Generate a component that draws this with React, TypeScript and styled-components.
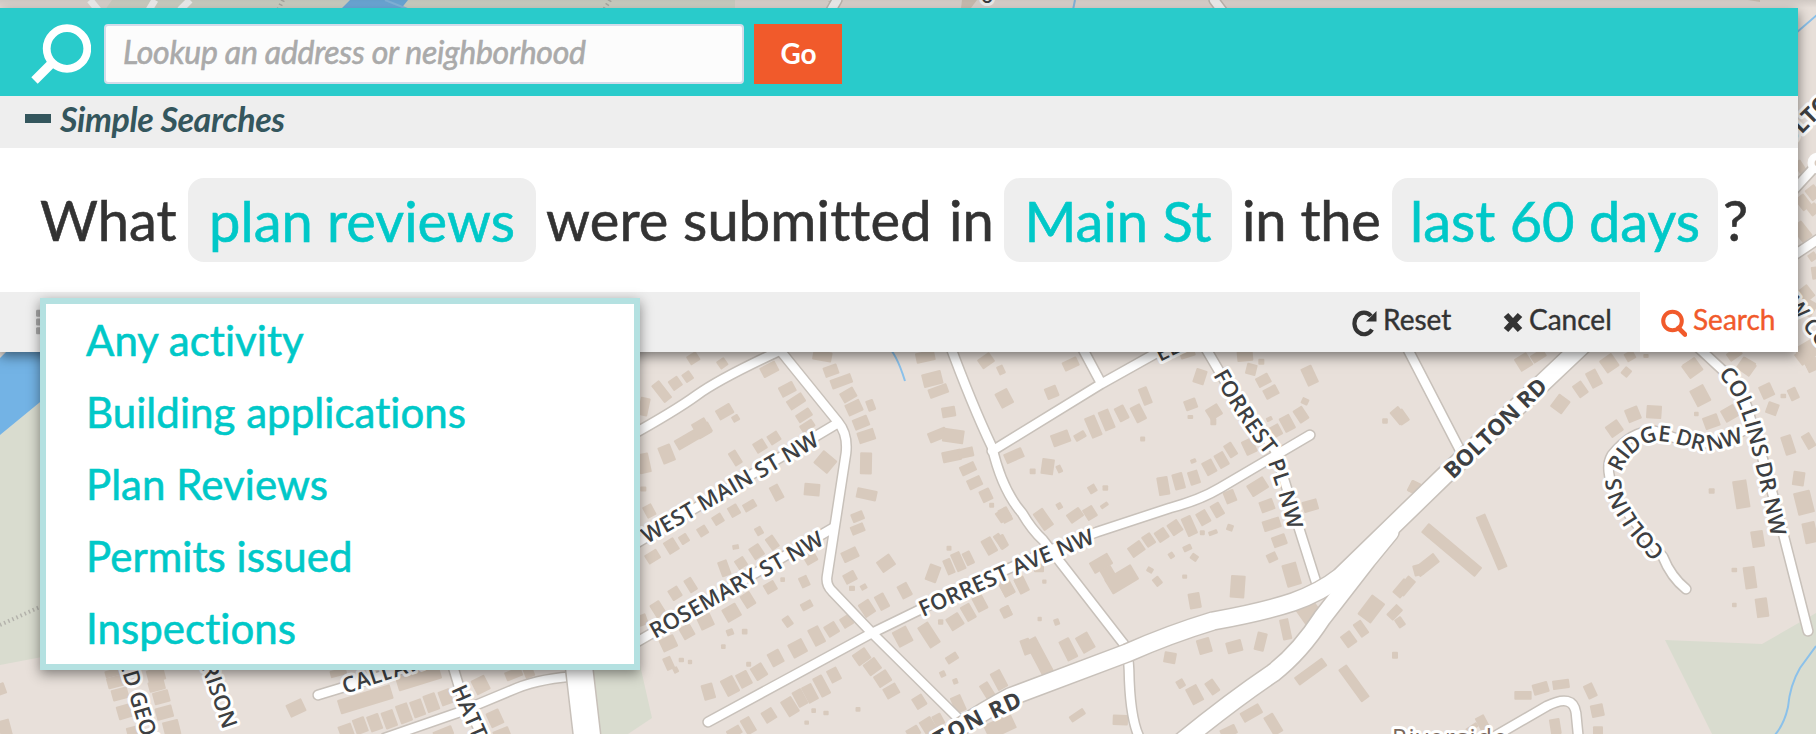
import React from 'react';
import styled, { createGlobalStyle } from 'styled-components';
import { FaTh } from 'react-icons/fa';

const GlobalStyle = createGlobalStyle`
  * { box-sizing: border-box; }
  body {
    margin: 0;
    background: #e8e0da;
    font-family: Lato, sans-serif;
    font-variant-ligatures: none;
    color: #333;
    overflow: hidden;
  }
  button, input { font-variant-ligatures: none; }
`;

const Page = styled.main`
  position: relative;
  width: 1816px;
  height: 734px;
  padding-top: 8px;
  overflow: hidden;
`;

const MapCanvas = styled.svg`
  position: absolute;
  inset: 0;
  display: block;
`;

const TopShade = styled.div`
  position: absolute;
  inset: 0 0 auto 0;
  height: 8px;
  background: linear-gradient(rgba(0, 0, 0, 0.1), rgba(0, 0, 0, 0));
`;

const Panel = styled.section`
  position: relative;
  width: 1798px;
  background: #fff;
  box-shadow: 0 4px 12px rgba(0, 0, 0, 0.5);
`;

const LookupBar = styled.form`
  display: flex;
  align-items: center;
  height: 88px;
  padding: 4px 0 0 30px;
  background: #29cbcb;
`;

const LookupIcon = styled.svg`
  display: block;
  flex: none;
  width: 61px;
  height: 62px;
  margin-right: 13px;
`;

const LookupInput = styled.input`
  width: 640px;
  height: 60px;
  margin: 0;
  padding: 0 17px 5px;
  border: 2px solid #d3dcea;
  border-radius: 4px;
  background: #fcfcfc;
  font: italic 400 32px Lato, sans-serif;
  letter-spacing: -0.27px;
  color: #333;
  -webkit-text-stroke: 0.6px currentColor;
  &::placeholder { color: #aaa; opacity: 1; }
`;

const GoButton = styled.button`
  width: 88px;
  height: 60px;
  margin-left: 10px;
  padding: 0 0 2px 1px;
  border: 0;
  background: #f15a2b;
  color: #fff;
  font: 700 28px Lato, sans-serif;
`;

const SectionBar = styled.header`
  display: flex;
  align-items: center;
  height: 52px;
  padding: 0 0 6px 25px;
  background: #eee;
  color: #34565d;
`;

const CollapseMark = styled.span`
  width: 26px;
  height: 9px;
  margin: 0 9px 1px 0;
  background: currentColor;
`;

const SectionTitle = styled.h2`
  margin: 0;
  font: italic 700 34px/48px Lato, sans-serif;
  letter-spacing: -0.4px;
`;

const Sentence = styled.div`
  display: flex;
  align-items: center;
  height: 144px;
  padding-left: 40px;
  font-size: 56px;
  line-height: 86px;
  white-space: pre;
  -webkit-text-stroke: 0.6px currentColor;
`;

const Words = styled.span<{ $width: number; $indent?: number; $tracking?: number }>`
  width: ${p => p.$width}px;
  padding-left: ${p => p.$indent ?? 0}px;
  letter-spacing: ${p => p.$tracking ?? 0}px;
`;

const Choice = styled.button<{ $width: number }>`
  width: ${p => p.$width}px;
  height: 84px;
  padding: 0;
  border: 0;
  border-radius: 16px;
  background: #eee;
  color: #00c8c8;
  font: 400 56px/86px Lato, sans-serif;
  letter-spacing: 0;
  white-space: nowrap;
`;

const ActionBar = styled.footer`
  display: flex;
  align-items: stretch;
  justify-content: flex-end;
  height: 60px;
  background: #eee;
`;

const GridToggle = styled.span`
  display: flex;
  align-items: center;
  margin-right: auto;
  padding-left: 36px;
  color: #aaa;
  font-size: 28px;
`;

const Action = styled.button<{ $width: number; $primary?: boolean }>`
  display: flex;
  align-items: center;
  gap: 6px;
  width: ${p => p.$width}px;
  padding: 0 0 6px ${p => (p.$primary ? 21 : 0)}px;
  border: 0;
  background: ${p => (p.$primary ? '#fff' : 'transparent')};
  color: ${p => (p.$primary ? '#f15a2b' : '#333')};
  font: 400 28px Lato, sans-serif;
  -webkit-text-stroke: 0.4px currentColor;
  & svg { flex: none; margin-top: 7px; }
`;

const Menu = styled.ul`
  position: absolute;
  left: 40px;
  top: 290px;
  width: 600px;
  height: 372px;
  margin: 0;
  padding: 0;
  border: 6px solid #b4e1e1;
  background: #fff;
  box-shadow: 0 4px 12px rgba(0, 0, 0, 0.45);
  list-style: none;
`;

const MenuItem = styled.li`
  height: 72px;
  padding-left: 40px;
  color: #00c8c8;
  font-size: 42px;
  line-height: 73px;
  letter-spacing: 0.05px;
  -webkit-text-stroke: 0.6px currentColor;
`;

type Footprint = [cx: number, cy: number, w: number, h: number, angle: number];
type District = { x: number; y: number; lots: Footprint[] };

const districts: District[] = [
  { x: 630, y: 340, lots: [
    [190,55,34,30,-32],[277,70,28,28,-35],[95,155,30,66,-38],[136,130,34,34,-35],[173,110,28,30,-35],[42,200,30,55,12],[110,342,40,54,-22],[190,288,118,34,-30],[215,265,46,52,-30],[284,215,50,34,-30],[317,235,22,20,-30],[316,354,26,46,-32],[390,318,36,34,-32],[432,294,36,32,-32],[418,88,52,34,-28],[472,148,48,34,-28],[498,184,54,32,-33],[522,226,48,28,-33],[532,258,44,26,-33],[577,48,58,30,10],[603,92,44,32,-20],[634,124,66,30,-20],[655,165,46,34,-30],[672,203,48,38,-25],[722,196,24,34,-20],[693,248,48,34,-22],[709,288,52,36,-18],[586,366,50,54,-50],[708,370,36,66,1],[710,463,62,32,12],[683,530,38,28,-22],[683,567,42,28,-22],[546,449,48,38,5],[440,458,30,48,-28],[42,370,36,60,-12],[40,447,18,15,0],[58,513,30,38,-28],[359,497,40,26,-30],[312,512,32,34,-30],[264,538,32,30,-32],[218,573,30,30,-32],[162,597,28,28,-32],[124,618,36,42,-32],[68,650,42,32,-32],[387,573,22,26,-30],[317,621,20,15,-10],[427,608,28,42,-35],[380,635,36,40,-33],[333,669,32,32,-33],[283,685,30,48,-20],[182,735,26,44,-32],[135,760,34,36,-32],[84,808,34,46,-32],[38,840,28,34,-20],[660,644,50,34,-25],[660,712,38,32,-28],[701,741,20,17,-30],[666,745,18,16,0],[540,652,38,38,-30],[523,725,28,34,-25],[458,719,14,14,0],[421,742,36,32,-30],[354,780,34,44,-32],[305,818,48,44,-30],[227,845,44,40,-25],[171,875,38,40,-30],[115,910,48,40,-25],[116,970,26,40,-24],[154,960,16,13,0],[137,990,16,19,-28],[180,966,13,13,0],[280,920,14,14,0],[300,877,22,20,-20],[344,875,17,17,0],[530,796,36,24,-28],[473,845,25,32,-35],[650,844,34,34,-32],[605,868,38,38,-32],[560,888,36,56,-28],[503,925,48,46,-28],[437,954,40,44,-28],[387,995,40,44,-32],[342,1018,38,46,-28],[300,1038,42,54,-28],[235,1055,36,48,-16],[356,973,15,15,0],[612,1005,34,42,-28],[575,1038,32,64,-28],[540,1060,34,54,-28],[510,1074,32,52,-28],[480,1100,38,54,-32],[417,1126,38,38,-32],[355,1157,32,50,-30],[313,1176,44,28,-30],[551,1112,14,14,0],[588,1119,16,14,0],[530,1148,14,13,0],[684,1108,15,14,0],[695,950,46,40,-35],[727,980,44,42,-36],[758,1016,45,40,-33],[784,1053,44,36,-30],[868,1085,36,38,-32],[985,1092,34,52,-24],[1072,1052,30,50,-32],[1107,1020,34,58,-28],[966,954,38,24,-32],[938,1002,18,19,-25],[976,1024,16,17,-20],[768,670,48,40,-35],[711,805,38,46,-33],[756,785,32,48,-28],[824,752,34,44,-28],[818,890,48,52,-28],[897,885,38,74,-33],[975,845,44,42,-32],[1015,817,32,50,-30],[1050,790,34,48,-28],[932,846,16,16,0],[1130,815,27,34,-25],[1130,742,36,52,-28],[1174,735,28,48,-28],[957,625,15,15,0],[909,700,36,52,20],[957,680,25,48,-23],[985,665,30,58,-24],[1015,655,26,42,-26],[1078,618,34,50,-30],[1111,604,22,50,-35],[886,50,58,32,-12],[907,117,60,42,-14],[925,153,60,30,-20],[956,216,42,32,-10],[923,285,58,32,-22],[970,288,64,42,8],[965,348,58,34,-12],[1008,338,46,30,-12],[1014,386,48,30,-25],[1034,428,44,32,-25],[1068,466,34,38,-25],[1085,496,15,15,0],[1120,525,40,36,-34],[1068,62,44,34,-35],[1113,90,21,28,-25],[1123,175,42,50,-28],[1152,347,58,32,-24],[1190,920,30,48,-20],[850,1176,40,30,-30],[895,1158,40,48,-32],[925,1140,30,36,-28],[1110,1160,90,48,-25]
  ] },
  { x: 1000, y: 340, lots: [
    [212,72,48,30,-25],[155,157,38,36,-22],[436,168,28,54,-22],[415,220,34,52,-27],[365,220,32,46,-27],[320,240,34,62,-23],[280,260,34,66,-23],[182,295,56,38,-20],[240,288,36,22,-30],[428,297,15,15,0],[562,40,46,26,-18],[600,110,35,45,18],[572,193,38,32,-20],[642,216,42,38,-32],[571,231,17,12,0],[640,245,18,22,0],[735,48,48,32,-5],[754,88,32,34,14],[784,65,18,18,0],[790,121,42,32,-28],[813,156,44,32,-28],[929,107,36,58,-25],[903,224,33,45,-33],[915,184,22,20,25],[862,250,35,48,-28],[825,274,38,36,-28],[808,237,19,13,-25],[748,320,36,46,-25],[692,330,28,44,-32],[665,360,32,46,-30],[628,382,34,44,-28],[582,413,32,42,-18],[536,424,33,50,-15],[490,438,34,56,-10],[580,363,18,13,-22],[143,380,38,48,8],[98,394,18,17,0],[178,387,16,24,-25],[277,447,25,25,-30],[316,444,17,17,0],[178,498,17,20,-30],[225,526,46,32,-35],[270,519,34,38,-32],[313,496,26,13,-35],[130,538,36,62,-35],[773,440,58,40,-32],[801,497,43,35,-20],[690,470,34,38,-22],[652,510,31,42,-30],[610,533,34,42,-30],[568,558,32,60,-24],[525,563,37,40,-34],[485,585,36,36,-34],[446,600,31,38,-34],[409,627,46,36,-35],[639,578,28,14,-20],[607,578,15,15,0],[690,563,20,20,20],[562,624,27,18,-25],[583,652,23,20,35],[514,646,17,19,-34],[303,670,64,38,-30],[325,702,38,42,-30],[365,718,92,52,-31],[450,690,20,16,30],[472,724,23,28,-38],[554,710,15,13,0],[713,740,44,68,4],[584,782,36,48,-10],[875,704,45,70,-16],[816,652,31,27,-25],[838,602,43,34,-20],[815,553,54,33,-18],[931,497,46,34,-16],[1197,227,34,50,-40],[1155,243,17,16,0],[1243,443,34,36,27],[16,525,31,45,-28],[6,605,28,40,-28],[65,735,32,50,-26],[19,745,32,48,-28],[18,816,30,32,-27],[119,837,13,13,0],[170,846,17,20,-20],[133,725,13,13,0],[117,684,30,26,0],[256,908,42,55,-30],[205,928,35,66,-27],[118,950,38,120,-28],[232,1126,50,21,-34],[361,1140,46,32,2],[613,918,41,46,-16],[703,920,48,36,-15],[782,905,31,56,14],[857,868,28,64,-12],[510,953,37,34,10],[542,1031,24,26,-30],[584,1064,38,54,-28],[637,1041,30,44,-35],[930,820,62,76,-35],[1114,807,50,74,37],[1083,866,29,48,-35],[1046,898,36,43,-36],[1206,745,32,55,40],[1184,817,28,45,44],[1200,847,24,31,-34],[1185,946,18,21,0],[932,995,104,30,-36],[1062,1030,31,120,-36],[754,1119,64,33,-30],[820,1153,33,64,-31],[686,1175,49,30,-25],[1255,690,30,34,-15]
  ] },
  { x: 1400, y: 340, lots: [
    [371,66,43,44,-32],[415,48,45,27,-32],[481,192,43,48,37],[541,148,33,44,-35],[582,116,35,52,-28],[628,70,45,46,-35],[679,96,25,27,40],[690,48,30,28,-30],[738,48,16,12,0],[875,82,42,43,-30],[901,167,47,56,-28],[934,245,47,39,-20],[989,220,45,41,-30],[889,222,14,14,0],[1042,76,42,37,30],[1100,153,39,42,-25],[1117,206,35,37,20],[1180,162,28,37,-25],[1150,168,17,14,0],[643,266,44,40,-35],[699,223,42,42,-22],[762,216,46,40,4],[5,231,32,43,-35],[43,442,30,37,25],[155,630,37,210,-50],[275,606,31,174,-23],[80,675,76,34,-38],[18,738,31,59,40],[1024,463,43,85,-9],[935,453,18,17,0],[1165,315,33,59,-18],[1226,303,29,47,-30],[1196,416,36,43,8],[1212,488,51,69,-14],[1073,597,38,50,-9],[1230,578,40,64,-12],[1050,713,36,67,-8],[1086,803,37,59,-8],[1003,690,17,14,0],[1003,795,14,14,0],[369,1066,52,26,0],[422,1045,48,34,-16],[483,1033,51,28,-8],[571,1053,30,45,-25],[592,1112,39,38,-12],[466,1160,32,48,-9],[247,1148,30,43,-28],[594,1173,30,28,0],[216,1163,39,15,-33],[1235,70,40,30,-30],[1220,28,65,42,-30]
  ] },
  { x: 0, y: 660, lots: [
    [0,88,34,35,-20],[15,205,36,52,-15],[342,38,55,22,-15],[345,66,48,34,-15],[360,102,50,35,-15],[374,155,45,42,-16],[468,45,54,40,-15],[470,77,50,32,-15],[484,112,49,38,-15],[493,158,52,38,-15],[515,205,49,47,-14],[398,216,35,32,-15],[888,144,52,42,-25]
  ] },
  { x: 330, y: 660, lots: [
    [106,118,165,45,-17],[266,54,135,43,-17],[25,38,50,22,-15],[452,75,45,48,-27],[551,42,52,28,-22],[597,38,30,30,-22],[48,212,42,38,-20],[91,197,38,48,-20],[134,188,38,50,-20],[178,178,38,53,-20],[222,160,38,58,-20],[263,145,37,52,-20],[304,128,39,54,-20],[347,112,37,46,-20],[495,175,42,48,-25],[515,220,50,28,-22],[340,219,60,28,-22]
  ] },
  { x: 1656, y: 0, lots: [
    [432,500,24,38,-33],[442,607,33,44,-38],[471,578,35,40,-38],[472,628,32,32,-38],[438,695,38,58,-38],[470,770,25,24,-35],[445,885,52,44,-38],[460,925,35,48,30],[478,819,23,38,-8],[109,1104,50,48,-36],[271,1100,49,42,35],[235,1062,44,28,-35],[455,1060,72,42,-37],[475,1095,50,33,-24]
  ] },
];

const minorRoads = [
  'M628 437Q675 411 697 395T777 352L800 338',
  'M770 338L838 422Q848 434 846 453L827 577Q826 585 832 591L872 633L962 722',
  'M630 547L838 423',
  'M630 646L833 528',
  'M708 722L872 633L950 595L1050 550L1097 532L1170 508Q1200 500 1220 488L1310 435',
  'M948 340Q972 405 992 447Q1002 490 1022 513Q1032 530 1043 540L1123 643Q1128 649 1129 670Q1130 728 1144 745',
  'M992 451L1101 384L1185 337',
  'M1078 340L1101 383',
  'M1202 342L1229 388L1275 450L1298 525L1317 585',
  'M1403 340L1461 452',
  'M1690 340L1730 377Q1745 395 1750 417L1767 473L1783 533L1808 631',
  'M1686 589Q1671 577 1663 557L1630 516Q1600 475 1612 455Q1632 430 1655 431Q1690 445 1714 443L1750 428',
  'M1490 739L1547 706Q1573 693 1576 713L1579 744',
  'M318 695L420 664',
  'M451 660L463 700L485 740',
  'M385 738L457 713L517 688Q542 678 580 676',
  'M1790 194L1812 170',
  'M1790 258L1820 238',
  'M837 0L829 14',
  'M1214 0L1226 16',
];

const majorRoads = [
  'M925 750L960 727Q985 710 1010 697L1127 653Q1170 634 1213 621Q1263 612 1293 602Q1321 592 1340 577L1443 477L1590 338',
  'M1180 743Q1230 702 1273 673Q1300 652 1322 618L1367 560L1390 532',
];

const Roads = ({ lines, width }: { lines: string[]; width: number }) => (
  <g fill="none" strokeLinecap="round" strokeLinejoin="round">
    {lines.map(d => <path key={d} d={d} stroke="#c8c1ba" strokeWidth={width + 3} />)}
    {lines.map(d => <path key={d} d={d} stroke="#fff" strokeWidth={width} />)}
  </g>
);

type StreetLabel = { id: string; name: string; path: string; length?: number; bold?: boolean };
const streets: StreetLabel[] = [
  { id: 'west-main', name: 'WEST MAIN ST NW', path: 'M647 544L840 433', length: 200 },
  { id: 'rosemary', name: 'ROSEMARY ST NW', path: 'M655 639L845 533', length: 195 },
  { id: 'forrest-ave', name: 'FORREST AVE NW', path: 'M923 617L1040 565L1120 533', length: 188 },
  { id: 'forrest-pl', name: 'FORREST PL NW', path: 'M1213 375Q1235 415 1264 453Q1278 485 1293 550', length: 174 },
  { id: 'bolton', name: 'BOLTON RD', path: 'M1453 480L1560 377', length: 133, bold: true },
  { id: 'bolton-west', name: 'BOLTON RD', path: 'M897 774Q960 732 1040 698', length: 144, bold: true },
  { id: 'collins-ridge', name: 'COLLINS RIDGE DR NW', path: 'M1665 552L1639 521L1627 502Q1620 488 1621 473C1627 455 1642 443 1657 441C1672 441 1688 448 1703 451Q1722 451 1770 432', length: 233 },
  { id: 'collins', name: 'COLLINS DR NW', path: 'M1718 374Q1738 397 1746 428Q1758 470 1775 555', length: 173 },
  { id: 'ella', name: 'ELLA ST', path: 'M1160 362L1240 322' },
  { id: 'old-george', name: 'OLD GEORGE', path: 'M114 645L157 787' },
  { id: 'garrison', name: 'GARRISON', path: 'M187 624L240 780' },
  { id: 'callaway', name: 'CALLAWAY', path: 'M345 694L460 656' },
  { id: 'hatt', name: 'HATTON', path: 'M451 689L500 800' },
  { id: 'bolton-east', name: 'BOLTON', path: 'M1778 158L1870 67', bold: true },
  { id: 'collins-north', name: 'NW COLLINS', path: 'M1775 291L1860 400' },
];

const StreetMap = () => (
  <MapCanvas width="1816" height="734" viewBox="0 0 1816 734">
    <rect width="1816" height="734" fill="#e8e0da" />
    <path d="M0 435L42 400V657L0 665ZM112 0H735V10H105ZM592 665H640L652 718L628 734H600ZM1665 640L1762 644L1816 613V734H1712Z" fill="#d9dccf" />
    <path d="M0 358L10 348H45V398L0 435ZM350 0H408L400 10H340Z" fill="#73b3e5" />
    <g fill="none" stroke="#8bc1ea" strokeWidth="2">
      <path d="M886 345Q896 352 905 381M1816 646L1800 668Q1790 685 1788 707Q1784 725 1774 736M1796 33L1818 14M1075 0L1073 10M385 0L410 10" />
    </g>
    <path d="M0 625L42 606M283 0L278 10M610 0L604 10" fill="none" stroke="#b4b3ac" strokeWidth="4" strokeDasharray="1.5 3" />
    {districts.map(district => (
      <g key={`${district.x}-${district.y}`} fill="#d8cabd" transform={`translate(${district.x} ${district.y}) scale(.33333)`}>
        {district.lots.map(([cx, cy, w, h, angle], i) => (
          <rect key={i} x={cx - w / 2} y={cy - h / 2} width={w} height={h} rx="3" transform={`rotate(${angle} ${cx} ${cy})`} />
        ))}
      </g>
    ))}
    <path d="M962 0h15l-6 8h-10zM1748 0h12v2zM828 1h10l2 5h-8z" fill="#d8cabd" />
    <Roads lines={minorRoads} width={8.5} />
    <circle cx="1818" cy="163" r="7" fill="#d8cabd" stroke="#fff" strokeWidth="7" />
    <Roads lines={['M578 658L588 744']} width={26} />
    <Roads lines={majorRoads} width={17} />
    <path d="M1328 588L1390 532L1367 562L1340 590Z" fill="#fff" />
    <path d="M90 0L98 10M155 0L149 10M190 0L180 10" stroke="#fff" strokeWidth="7" />
    <g fontFamily="'Open Sans', 'Noto Sans', sans-serif" fill="#3d3f42" stroke="#fff" strokeWidth="6" strokeLinejoin="round" paintOrder="stroke">
      {streets.map(street => (
        <g key={street.id}>
          <path id={street.id} d={street.path} fill="none" stroke="none" />
          <text fontSize={street.bold ? 22.5 : 22} fontWeight={street.bold ? 700 : 600} textLength={street.length}>
            <textPath href={`#${street.id}`}>{street.name}</textPath>
          </text>
        </g>
      ))}
      <text x="981" y="3" fontSize="20" fontWeight="600">o</text>
      <text x="1392" y="746" fontSize="24" fontWeight="400" fill="#79675b" textLength="115">Riverside</text>
    </g>
  </MapCanvas>
);

const ResetIcon = () => (
  <svg width="25" height="28" viewBox="0 0 25 28">
    <path d="M20 20.5A9.6 10.8 0 1 1 19 7" fill="none" stroke="currentColor" strokeWidth="4.2" />
    <path d="M24.5 2V12.5H14Z" fill="currentColor" />
  </svg>
);

const CancelIcon = () => (
  <svg width="20" height="23" viewBox="0 0 20 23">
    <path d="M3 4L17 19M17 4L3 19" stroke="currentColor" strokeWidth="6.2" />
  </svg>
);

const SearchIcon = () => (
  <svg width="26" height="30" viewBox="0 0 26 30">
    <circle cx="11.5" cy="13" r="9.3" fill="none" stroke="currentColor" strokeWidth="4" />
    <path d="M17.5 20L24 26.5" stroke="currentColor" strokeWidth="4.6" strokeLinecap="round" />
  </svg>
);

export default function App() {
  return (
    <>
      <GlobalStyle />
      <Page>
        <StreetMap />
        <TopShade />
        <Panel>
          <LookupBar>
            <LookupIcon viewBox="0 0 61 62">
              <circle cx="37" cy="25.5" r="20.3" fill="none" stroke="#fff" strokeWidth="7.8" />
              <path d="M23 39L4.5 57.5" stroke="#fff" strokeWidth="9" />
            </LookupIcon>
            <LookupInput placeholder="Lookup an address or neighborhood" />
            <GoButton type="button">Go</GoButton>
          </LookupBar>
          <SectionBar>
            <CollapseMark />
            <SectionTitle>Simple Searches</SectionTitle>
          </SectionBar>
          <Sentence>
            <Words $width={148}>What</Words>
            <Choice $width={348}>plan reviews</Choice>
            <Words $width={403} $indent={10} $tracking={0.15}>were submitted</Words>
            <Words $width={65} $indent={10}>in</Words>
            <Choice $width={228}>Main St</Choice>
            <Words $width={160} $indent={10} $tracking={-0.2}>in the</Words>
            <Choice $width={326}>last 60 days</Choice>
            <Words $width={40} $indent={5}>?</Words>
          </Sentence>
          <ActionBar>
            <GridToggle><FaTh /></GridToggle>
            <Action $width={151}><ResetIcon />Reset</Action>
            <Action $width={137}><CancelIcon />Cancel</Action>
            <Action $width={158} $primary><SearchIcon />Search</Action>
          </ActionBar>
          <Menu>
            <MenuItem>Any activity</MenuItem>
            <MenuItem>Building applications</MenuItem>
            <MenuItem>Plan Reviews</MenuItem>
            <MenuItem>Permits issued</MenuItem>
            <MenuItem>Inspections</MenuItem>
          </Menu>
        </Panel>
      </Page>
    </>
  );
}
